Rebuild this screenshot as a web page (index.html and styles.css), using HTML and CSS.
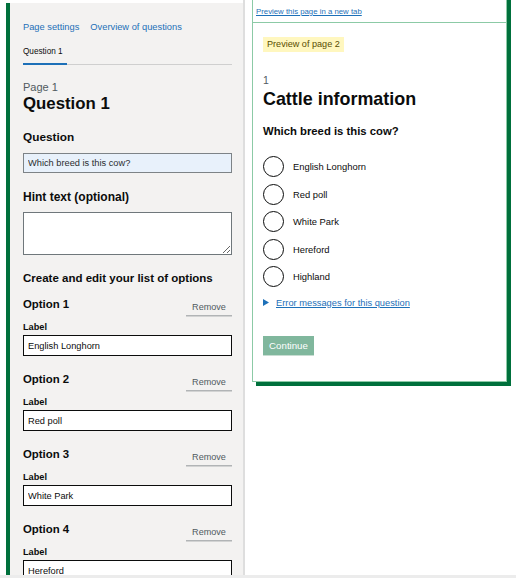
FILE: index.html
```html
<!DOCTYPE html>
<html lang="en">
<head>
<meta charset="utf-8">
<title>Edit question</title>
<link rel="stylesheet" href="styles.css">
</head>
<body>
<div class="layout">
  <section class="editor">
    <nav class="tab-links">
      <a href="#" class="link">Page settings</a>
      <a href="#" class="link">Overview of questions</a>
    </nav>
    <div class="tab-list">
      <span class="tab-current">Question 1</span>
    </div>
    <p class="caption">Page 1</p>
    <h1 class="heading">Question 1</h1>

    <label class="field-label">Question</label>
    <input class="input input-focus" type="text" value="Which breed is this cow?">

    <label class="field-label hint-label">Hint text (optional)</label>
    <textarea class="textarea"></textarea>

    <h2 class="section-title">Create and edit your list of options</h2>

    <div class="option">
      <div class="option-head">
        <h3 class="option-title">Option 1</h3>
        <button class="remove">Remove</button>
      </div>
      <label class="small-label">Label</label>
      <input class="input" type="text" value="English Longhorn">
    </div>
    <div class="option">
      <div class="option-head">
        <h3 class="option-title">Option 2</h3>
        <button class="remove">Remove</button>
      </div>
      <label class="small-label">Label</label>
      <input class="input" type="text" value="Red poll">
    </div>
    <div class="option">
      <div class="option-head">
        <h3 class="option-title">Option 3</h3>
        <button class="remove">Remove</button>
      </div>
      <label class="small-label">Label</label>
      <input class="input" type="text" value="White Park">
    </div>
    <div class="option">
      <div class="option-head">
        <h3 class="option-title">Option 4</h3>
        <button class="remove">Remove</button>
      </div>
      <label class="small-label">Label</label>
      <input class="input" type="text" value="Hereford">
    </div>
  </section>

  <section class="preview-col">
    <div class="frame">
      <div class="frame-top">
        <a href="#" class="link small-link">Preview this page in a new tab</a>
      </div>
      <div class="frame-body">
        <span class="tag">Preview of page 2</span>
        <p class="q-number">1</p>
        <h2 class="page-heading">Cattle information</h2>
        <p class="legend">Which breed is this cow?</p>
        <div class="radios">
          <div class="radio"><span class="circle"></span><span class="radio-label">English Longhorn</span></div>
          <div class="radio"><span class="circle"></span><span class="radio-label">Red poll</span></div>
          <div class="radio"><span class="circle"></span><span class="radio-label">White Park</span></div>
          <div class="radio"><span class="circle"></span><span class="radio-label">Hereford</span></div>
          <div class="radio"><span class="circle"></span><span class="radio-label">Highland</span></div>
        </div>
        <div class="details">
          <svg class="arrow" width="6" height="7" viewBox="0 0 6 7"><path d="M0 0 L6 3.5 L0 7 Z" fill="#1d70b8"/></svg>
          <a href="#" class="link">Error messages for this question</a>
        </div>
        <button class="continue">Continue</button>
      </div>
    </div>
  </section>
</div>
</body>
</html>
```
FILE: styles.css
```css
* { box-sizing: border-box; }
html, body { margin: 0; padding: 0; background: #ffffff; }
body {
  font-family: "Liberation Sans", Arial, sans-serif;
  color: #0b0c0c;
}
p, h1, h2, h3 { margin: 0; }

.layout {
  display: flex;
  align-items: flex-start;
  height: 578px;
  border-bottom: 3px solid #ececec;
  padding-left: 6px;
  overflow: hidden;
}

/* ---------- left editor ---------- */
.editor {
  width: 237px;
  height: 572px;
  flex: none;
  margin-top: 3px;
  background: #f3f2f1;
  border-left: 4px solid #00703c;
  padding: 0 11px 0 13px;
  overflow: hidden;
}
.link {
  color: #1d70b8;
}
.tab-links {
  display: flex;
  gap: 11px;
  margin-top: 17px;
  font-size: 9.3px;
  line-height: 14px;
}
.tab-links .link { text-decoration: none; }
.tab-list {
  margin-top: 11px;
  border-bottom: 1px solid #cfcfcf;
  display: flex;
}
.tab-current {
  font-size: 8.2px;
  line-height: 14px;
  padding-bottom: 4px;
  width: 44px;
  border-bottom: 2px solid #1d70b8;
  margin-bottom: -1px;
}
.caption {
  margin-top: 15px;
  font-size: 11px;
  line-height: 14px;
  color: #505a5f;
}
.heading {
  font-size: 16.8px;
  line-height: 20px;
  font-weight: 700;
}
.field-label {
  display: block;
  margin-top: 15px;
  font-size: 11.8px;
  line-height: 16px;
  font-weight: 700;
}
.hint-label { margin-top: 16px; font-size: 12px; }
.input {
  display: block;
  width: 100%;
  height: 21px;
  margin: 0;
  padding: 0 4px;
  border: 1.5px solid #0b0c0c;
  border-radius: 0;
  background: #ffffff;
  font-family: inherit;
  font-size: 9.25px;
  color: #0b0c0c;
  outline: none;
}
.field-label + .input { margin-top: 8px; height: 20px; }
.input-focus {
  background: #e8f1fb;
  border-color: #7d8387;
  color: #2b2d30;
}
.textarea {
  display: block;
  width: 100%;
  height: 43px;
  margin-top: 7px;
  border: 1.5px solid #6f777b;
  border-radius: 0;
  background: #ffffff;
  resize: vertical;
  font-family: inherit;
}
.section-title {
  margin-top: 15px;
  font-size: 11.5px;
  line-height: 16px;
  font-weight: 700;
}
.option { margin-top: 10px; }
.option + .option { margin-top: 15px; }
.option-head {
  display: flex;
  justify-content: space-between;
  align-items: flex-start;
}
.option-title {
  font-size: 11.4px;
  line-height: 16px;
  font-weight: 700;
}
.remove {
  margin-top: 2px;
  width: 46px;
  height: 17px;
  padding: 0;
  border: 0;
  background: #f3f2f1;
  box-shadow: 0 1.5px 0 #b1b4b6;
  font-family: inherit;
  font-size: 9.1px;
  color: #505a5f;
}
.small-label {
  display: block;
  margin-top: 6px;
  font-size: 9.2px;
  line-height: 12px;
  font-weight: 700;
}
.small-label + .input { margin-top: 2px; }

/* ---------- right preview ---------- */
.preview-col {
  flex: 1;
  height: 575px;
  border-left: 2px solid #dedede;
  padding-left: 7px;
}
.frame {
  width: 255px;
  margin-top: -5px;
  border: 1px solid #8ccaa6;
  border-top: 0;
  background: #ffffff;
  box-shadow: 4px 4px 0 #00703c;
}
.frame-top {
  height: 28px;
  border-bottom: 1px solid #8ccaa6;
  padding: 11px 0 0 3px;
  font-size: 7.8px;
  line-height: 12px;
}
.frame-body {
  padding: 14px 10px 26px 10px;
  display: flex;
  flex-direction: column;
  align-items: flex-start;
}
.tag {
  display: inline-block;
  height: 15px;
  padding: 0 4px;
  background: #fff7bf;
  color: #594d00;
  font-size: 9.1px;
  line-height: 15px;
}
.q-number {
  margin-top: 22px;
  font-size: 10.5px;
  line-height: 12px;
  color: #505a5f;
}
.page-heading {
  margin-top: 3px;
  font-size: 17.9px;
  line-height: 20px;
  font-weight: 700;
}
.legend {
  margin-top: 14px;
  font-size: 11.3px;
  line-height: 16px;
  font-weight: 700;
}
.radios {
  margin-top: 17px;
  display: flex;
  flex-direction: column;
  gap: 6.5px;
}
.radio {
  display: flex;
  align-items: center;
  gap: 9px;
  height: 21px;
}
.circle {
  width: 21px;
  height: 21px;
  border: 1.5px solid #0b0c0c;
  border-radius: 50%;
  flex: none;
}
.radio-label {
  font-size: 9.4px;
  color: #0b0c0c;
}
.details {
  margin-top: 9.5px;
  display: flex;
  align-items: center;
  gap: 7px;
  font-size: 9.3px;
  line-height: 12px;
}
.arrow { flex: none; }
.continue {
  margin-top: 27px;
  width: 51px;
  height: 19px;
  padding: 0;
  border: 0;
  background: #80b79d;
  box-shadow: 0 1px 0 #c8ddd2;
  color: #ffffff;
  font-family: inherit;
  font-size: 9.7px;
}
```
